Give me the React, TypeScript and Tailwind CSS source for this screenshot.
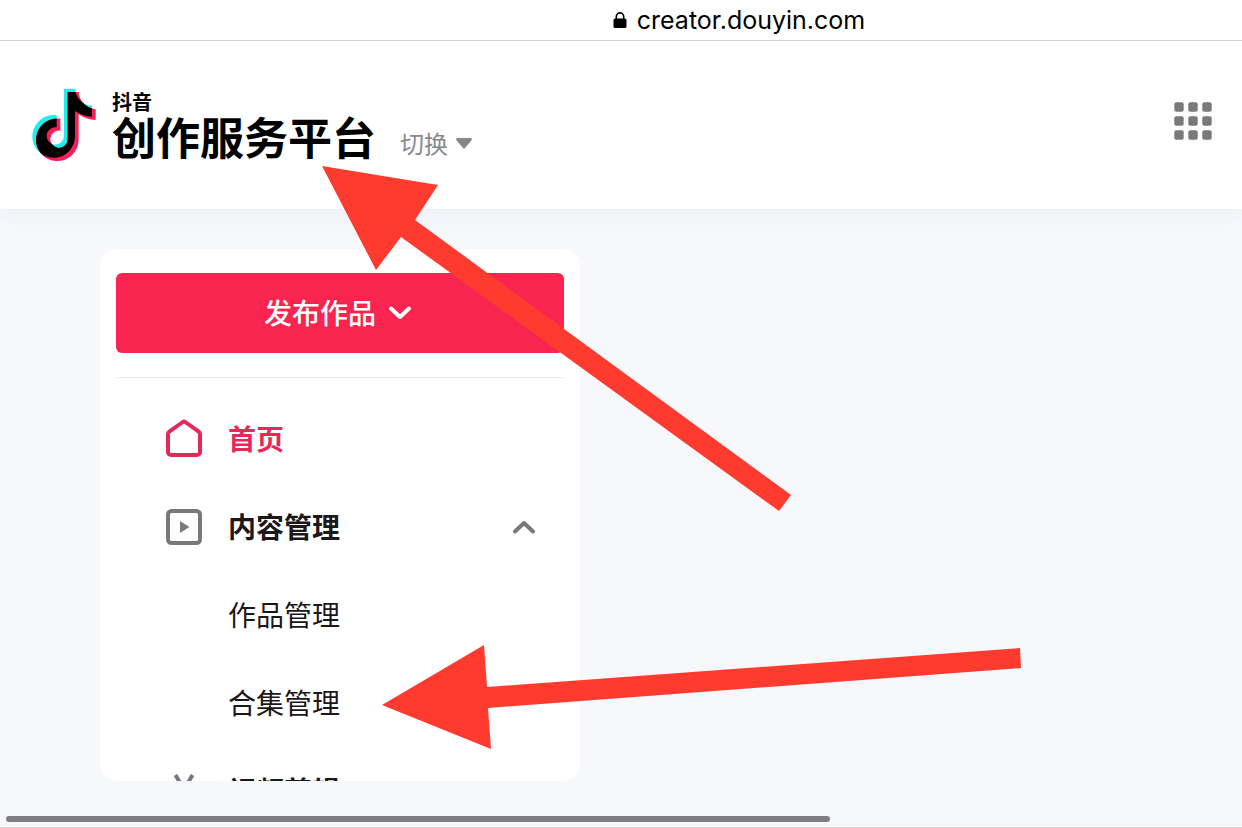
import type { ReactNode } from "react";

const NOTE_PATH =
  "M132 38H165C167 64 186 86 216 90V122C196 122 179 115 165 105V182A64 64 0 1 1 110 118V154A26 26 0 1 0 132 180Z";

function NoteLogo() {
  return (
    <svg className="h-[74px] w-[66px] shrink-0" viewBox="36 36 198 222" aria-hidden="true">
      <defs>
        <clipPath id="note-front">
          <path d={NOTE_PATH} />
        </clipPath>
      </defs>
      <path d={NOTE_PATH} fill="#20efe9" />
      <path d={NOTE_PATH} fill="#fb1d5a" transform="translate(11 10)" />
      <g clipPath="url(#note-front)">
        <path d={NOTE_PATH} fill="#000" transform="translate(11 10)" />
      </g>
    </svg>
  );
}

function LockIcon() {
  return (
    <svg className="h-[17px] w-[14px]" viewBox="0 0 14 17" aria-hidden="true">
      <rect x="0.5" y="6.500" width="13" height="9.5" rx="1.6" fill="#000" />
      <path d="M3.3 8V4.600a3.7 3.7 0 0 1 7.4 0V8" fill="none" stroke="#000" strokeWidth="1.6" />
    </svg>
  );
}

function GridIcon() {
  const steps = [0, 14, 28];
  return (
    <svg className="size-[38px]" viewBox="0 0 38 38" fill="#7a7a7a" aria-hidden="true">
      {steps.map((y) => steps.map((x) => <rect key={`${x}-${y}`} x={x + 0.3} y={y + 0.3} width="9.4" height="9.4" rx="2" />))}
    </svg>
  );
}

function HomeIcon() {
  return (
    <svg className="size-10" viewBox="0 0 40 40" fill="none" stroke="#e8285a" strokeWidth="4" strokeLinejoin="round" aria-hidden="true">
      <path d="M4 15.2a3 3 0 0 1 1.300-2.500L18.800 3a2.200 2.200 0 0 1 2.400 0l13.500 9.700a3 3 0 0 1 1.300 2.500V33a3 3 0 0 1-3 3H7a3 3 0 0 1-3-3Z" />
    </svg>
  );
}

function VideoIcon() {
  return (
    <svg className="size-10" viewBox="0 0 40 40" aria-hidden="true">
      <rect x="4" y="4" width="32" height="32" rx="3.500" fill="none" stroke="#7b7879" strokeWidth="4" />
      <path d="M16 14v12l9.500-6Z" fill="#7b7879" />
    </svg>
  );
}

function ScissorsIcon() {
  return (
    <svg className="size-10" viewBox="0 0 40 40" fill="none" stroke="#77777a" strokeWidth="4" aria-hidden="true">
      <path d="M11.500 4 26 29M28.500 4 14 29" />
      <circle cx="11" cy="32" r="4" />
      <circle cx="29" cy="32" r="4" />
    </svg>
  );
}

function Chevron({ up = false, className }: { up?: boolean; className: string }) {
  return (
    <svg className={className} viewBox="0 0 24 14" fill="none" stroke="currentColor" strokeWidth="4" strokeLinecap="round" strokeLinejoin="round" aria-hidden="true">
      <path d={up ? "M3 11.500 12 3l9 8.500" : "M3 2.500 12 11l9-8.500"} />
    </svg>
  );
}

function MenuItem({ icon, label, tone, end }: { icon?: ReactNode; label: string; tone: string; end?: ReactNode }) {
  return (
    <li>
      <a href="#" className={`flex h-[88px] items-center pr-7 pl-12 text-[28px] leading-10 ${tone}`}>
        <span className="mr-6 size-10 shrink-0">{icon}</span>
        <span className="pb-0.5">{label}</span>
        {end}
      </a>
    </li>
  );
}

function Arrows() {
  return (
    <svg className="pointer-events-none absolute top-0 left-0 h-[828px] w-[1242px]" viewBox="0 0 1242 828" fill="#ff3b30" aria-hidden="true">
      <path d="M322 166 438 185 415 220 791 495 779 511 401 237 376 270Z" />
      <path d="M382 705 484 645 487 687 1020 648 1021 668 488 708 491 749Z" />
    </svg>
  );
}

export default function App() {
  return (
    <div className="relative flex h-screen flex-col overflow-hidden bg-[#f7f8fc] font-['Noto_Sans_CJK_SC',sans-serif]">
      <div className="relative z-10 flex h-[41px] shrink-0 items-center justify-center gap-2.5 border-b border-[#d4d4d4] bg-white pl-[236px] font-['Inter',sans-serif]">
        <LockIcon />
        <span className="text-[25px] leading-10 text-black">creator.douyin.com</span>
      </div>

      <header className="flex h-[168px] shrink-0 items-start justify-between bg-white pr-[30px] pl-8 shadow-[0_2px_24px_rgba(60,70,120,0.06)]">
        <div className="flex items-start pt-[47px]">
          <NoteLogo />
          <h1 className="ml-3.5 font-bold text-black">
            <span className="block pt-1 text-[20px] leading-5">抖音</span>
            <span className="block text-[44px] leading-[48px]">创作服务平台</span>
          </h1>
          <button type="button" className="mt-[35px] ml-6 flex items-center gap-2 text-[24px] leading-10 text-[#89898d]">
            切换
            <svg className="h-[11px] w-4" viewBox="0 0 16 11" fill="#87878b" aria-hidden="true">
              <path d="M1.500 0h13a1.300 1.300 0 0 1 1 2.200L9 10a1.300 1.300 0 0 1-2 0L.500 2.200A1.300 1.300 0 0 1 1.500 0Z" />
            </svg>
          </button>
        </div>
        <button type="button" aria-label="应用" className="mt-[61px]">
          <GridIcon />
        </button>
      </header>

      <main className="flex min-h-0 flex-1 px-[100px] pt-10 pb-[35px]">
        <aside className="w-[480px] overflow-hidden rounded-2xl bg-white px-4 pt-6">
          <button type="button" className="flex h-20 w-full items-center justify-center gap-3 rounded-md bg-[#f9244f] pr-1 text-[28px] leading-10 font-medium text-white">
            <span className="pb-0.5">发布作品</span>
            <Chevron className="h-[14px] w-6" />
          </button>
          <nav className="mt-6 border-t border-[#ebebed] pt-[17px]">
            <ul>
              <MenuItem icon={<HomeIcon />} label="首页" tone="font-bold text-[#e8285a]" />
              <MenuItem
                icon={<VideoIcon />}
                label="内容管理"
                tone="font-bold text-[#1c1719]"
                end={<Chevron up className="ml-auto h-[14px] w-6 text-[#7b7879]" />}
              />
              <MenuItem label="作品管理" tone="text-[#1c1719]" />
              <MenuItem label="合集管理" tone="text-[#1c1719]" />
              <MenuItem icon={<ScissorsIcon />} label="视频剪辑" tone="font-bold text-[#1c1719]" />
            </ul>
          </nav>
        </aside>
      </main>

      <div className="flex h-3 shrink-0 items-start border-b border-[#d4d4d4] px-1.5">
        <div className="h-1.5 w-[67%] rounded-full bg-[#7e7e80]" />
      </div>
      <Arrows />
    </div>
  );
}
